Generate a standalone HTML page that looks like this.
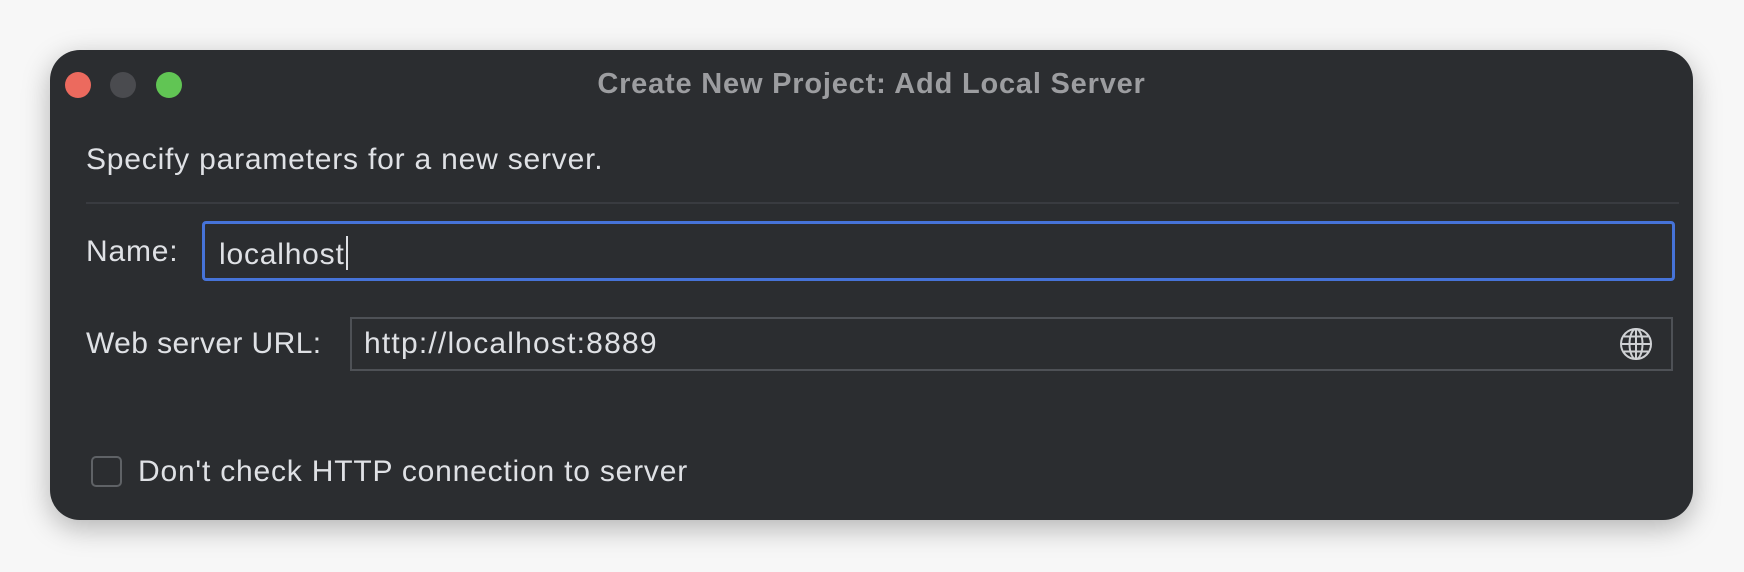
<!DOCTYPE html>
<html><head><meta charset="utf-8"><style>
html,body{margin:0;padding:0;}
body{width:1744px;height:572px;background:#f7f7f7;position:relative;overflow:hidden;font-family:"Liberation Sans",sans-serif;}
.win{position:absolute;left:50px;top:50px;width:1643px;height:470px;background:#2b2d30;border-radius:30px;box-shadow:0 8px 28px rgba(0,0,0,0.28);}
.dot{position:absolute;width:26px;height:26px;border-radius:50%;top:22px;}
.t{position:absolute;color:#dfe1e5;font-size:30px;letter-spacing:0.8px;white-space:nowrap;line-height:1;}
.title{position:absolute;left:0;right:0;top:18px;text-align:center;color:#9c9da0;font-weight:bold;font-size:29px;letter-spacing:0.8px;}
.sep{position:absolute;left:36px;width:1593px;top:152px;height:2px;background:#393b40;}
.f1{position:absolute;left:152px;top:171px;width:1467px;height:54px;border:3px solid #4673d8;border-radius:4px;}
.f2{position:absolute;left:300px;top:267px;width:1319px;height:50px;border:2px solid #4e5156;}
.cb{position:absolute;left:41px;top:406px;width:27px;height:27px;border:2px solid #5f6266;border-radius:5px;}
</style></head><body>
<div class="win">
  <div class="dot" style="left:15px;background:#ec6a5e"></div>
  <div class="dot" style="left:60px;background:#4a4b4f"></div>
  <div class="dot" style="left:106px;background:#61c554"></div>
  <div class="title">Create New Project: Add Local Server</div>
  <div class="t" style="left:36px;top:95px">Specify parameters for a new server.</div>
  <div class="sep"></div>
  <div class="t" style="left:36px;top:187px">Name:</div>
  <div class="f1"></div>
  <div class="t" style="left:169px;top:186px">localhost<span style="display:inline-block;width:2px;height:34px;background:#dfe1e5;vertical-align:-6px;margin-left:1px"></span></div>
  <div class="t" style="left:36px;top:279px;letter-spacing:0.4px">Web server URL:</div>
  <div class="f2"></div>
  <div class="t" style="left:314px;top:279px;letter-spacing:1.2px">http://localhost:8889</div>
  <svg style="position:absolute;left:1569px;top:277px" width="34" height="34" viewBox="0 0 34 34" fill="none" stroke="#cfd1d4" stroke-width="2">
    <circle cx="17" cy="17" r="15"/>
    <ellipse cx="17" cy="17" rx="6.5" ry="15"/>
    <line x1="17" y1="2" x2="17" y2="32"/>
    <line x1="2" y1="17" x2="32" y2="17"/>
    <path d="M5 9.5H29M5 24.5H29"/>
  </svg>
  <div class="cb"></div>
  <div class="t" style="left:88px;top:407px">Don't check HTTP connection to server</div>
</div>
</body></html>
